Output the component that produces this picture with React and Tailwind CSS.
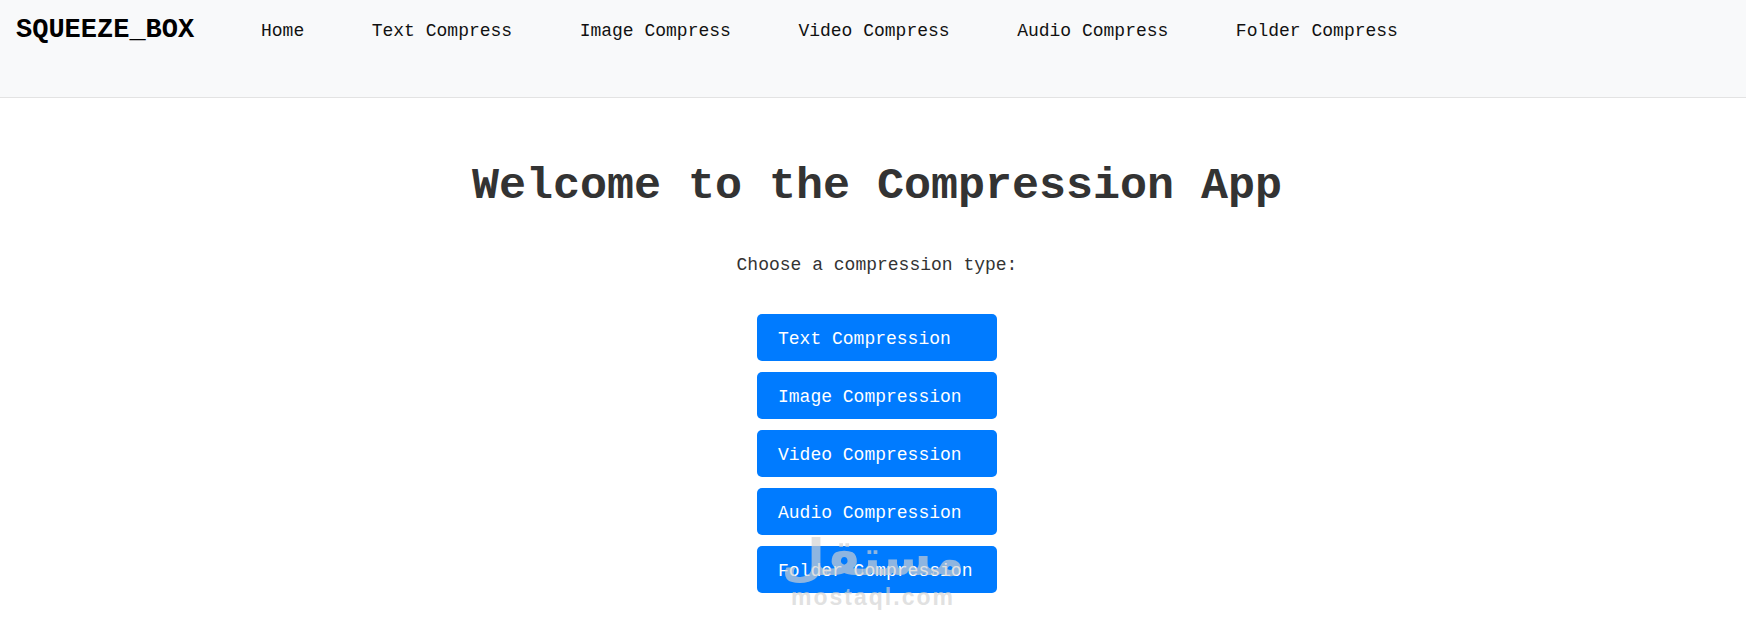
export default function App() {
  const mono = { fontFamily: '"Liberation Mono", "DejaVu Sans Mono", monospace' };
  const navItems = ["Home", "Text Compress", "Image Compress", "Video Compress", "Audio Compress", "Folder Compress"];
  const buttons = ["Text Compression", "Image Compression", "Video Compression", "Audio Compression", "Folder Compression"];
  return (
    <div className="relative min-h-[625px] bg-white" style={mono}>
      <header className="h-[98px] bg-[#f8f9fa] border-b border-[#e3e3e3]">
        <div className="flex h-[60px] items-center px-4">
          <div className="w-[185px] text-[27px] font-bold leading-[34px] text-black">SQUEEZE_BOX</div>
          <nav className="ml-[60px] flex items-center gap-[67.5px]">
            {navItems.map((n) => (
              <a key={n} className="text-[18px] leading-[24px] text-[#111] pt-[2px]">{n}</a>
            ))}
          </nav>
        </div>
      </header>
      <main className="flex flex-col items-center pl-2">
        <h1 className="mt-[62px] text-[45px] font-bold leading-[54px] text-[#333]">Welcome to the Compression App</h1>
        <p className="mt-[38px] text-[18px] leading-[27px] text-[#333]">Choose a compression type:</p>
        <div className="mt-[35px] flex flex-col gap-[11px]">
          {buttons.map((b) => (
            <button key={b} className="flex h-[47px] w-[240px] items-center rounded-[5px] bg-[#007bff] pl-[21px] pt-[3px] text-left text-[18px] leading-[24px] text-white">
              {b}
            </button>
          ))}
        </div>
      </main>
      <div className="pointer-events-none absolute left-[790px] top-[528px] flex w-[166px] flex-col items-center text-[rgba(210,210,210,0.68)]">
        <div className="text-[50px] font-bold leading-[60px]" style={{ fontFamily: '"DejaVu Sans", sans-serif' }} dir="rtl">مستقل</div>
        <div className="-mt-[5px] text-[23px] font-bold leading-[28px] tracking-[2px]" style={{ fontFamily: '"Liberation Sans", Arial, sans-serif' }}>mostaql.com</div>
      </div>
    </div>
  );
}
